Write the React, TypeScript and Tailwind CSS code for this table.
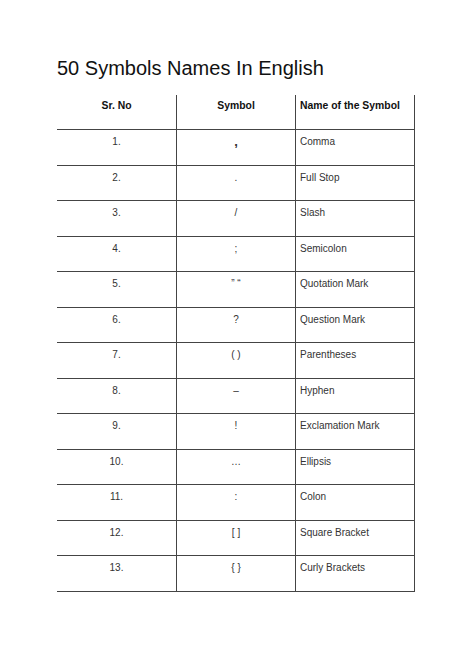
import React from "react";

const rows: [string, string, string][] = [
  ["1.", ",", "Comma"],
  ["2.", ".", "Full Stop"],
  ["3.", "/", "Slash"],
  ["4.", ";", "Semicolon"],
  ["5.", "” “", "Quotation Mark"],
  ["6.", "?", "Question Mark"],
  ["7.", "( )", "Parentheses"],
  ["8.", "–", "Hyphen"],
  ["9.", "!", "Exclamation Mark"],
  ["10.", "…", "Ellipsis"],
  ["11.", ":", "Colon"],
  ["12.", "[ ]", "Square Bracket"],
  ["13.", "{ }", "Curly Brackets"],
];

const App: React.FC = () => {
  return (
    <div
      className="min-h-[669px] w-[474px] bg-white text-[#222]"
      style={{ fontFamily: '"Liberation Sans", Arial, sans-serif' }}
    >
      <div className="pl-[57px] pt-[57px]">
        <h1 className="text-[20px] leading-[23px] text-[#111]">
          50 Symbols Names In English
        </h1>

        <div className="mt-[15px] w-[358px]">
          {/* header */}
          <div className="flex h-[35px] border-b border-[#444] text-[10.4px] font-bold leading-[12px] text-[#111]">
            <div className="w-[120px] border-r border-[#444] pt-[5px] text-center">
              Sr. No
            </div>
            <div className="w-[119px] border-r border-[#444] pt-[5px] text-center">
              Symbol
            </div>
            <div className="w-[119px] border-r border-[#444] pl-[4px] pt-[5px]">
              Name of the Symbol
            </div>
          </div>

          {rows.map(([no, sym, name]) => (
            <div
              key={no}
              className="flex h-[35.5px] border-b border-[#444] text-[10px] leading-[12px] text-[#333]"
            >
              <div className="w-[120px] border-r border-[#444] pt-[6px] text-center">
                {no}
              </div>
              <div
                className={
                  sym === ","
                    ? "w-[119px] border-r border-[#444] pt-[6px] text-center text-[13px] font-bold"
                    : "w-[119px] border-r border-[#444] pt-[6px] text-center"
                }
              >
                {sym}
              </div>
              <div className="w-[119px] border-r border-[#444] pl-[4px] pt-[6px]">
                {name}
              </div>
            </div>
          ))}
        </div>
      </div>
    </div>
  );
};

export default App;
